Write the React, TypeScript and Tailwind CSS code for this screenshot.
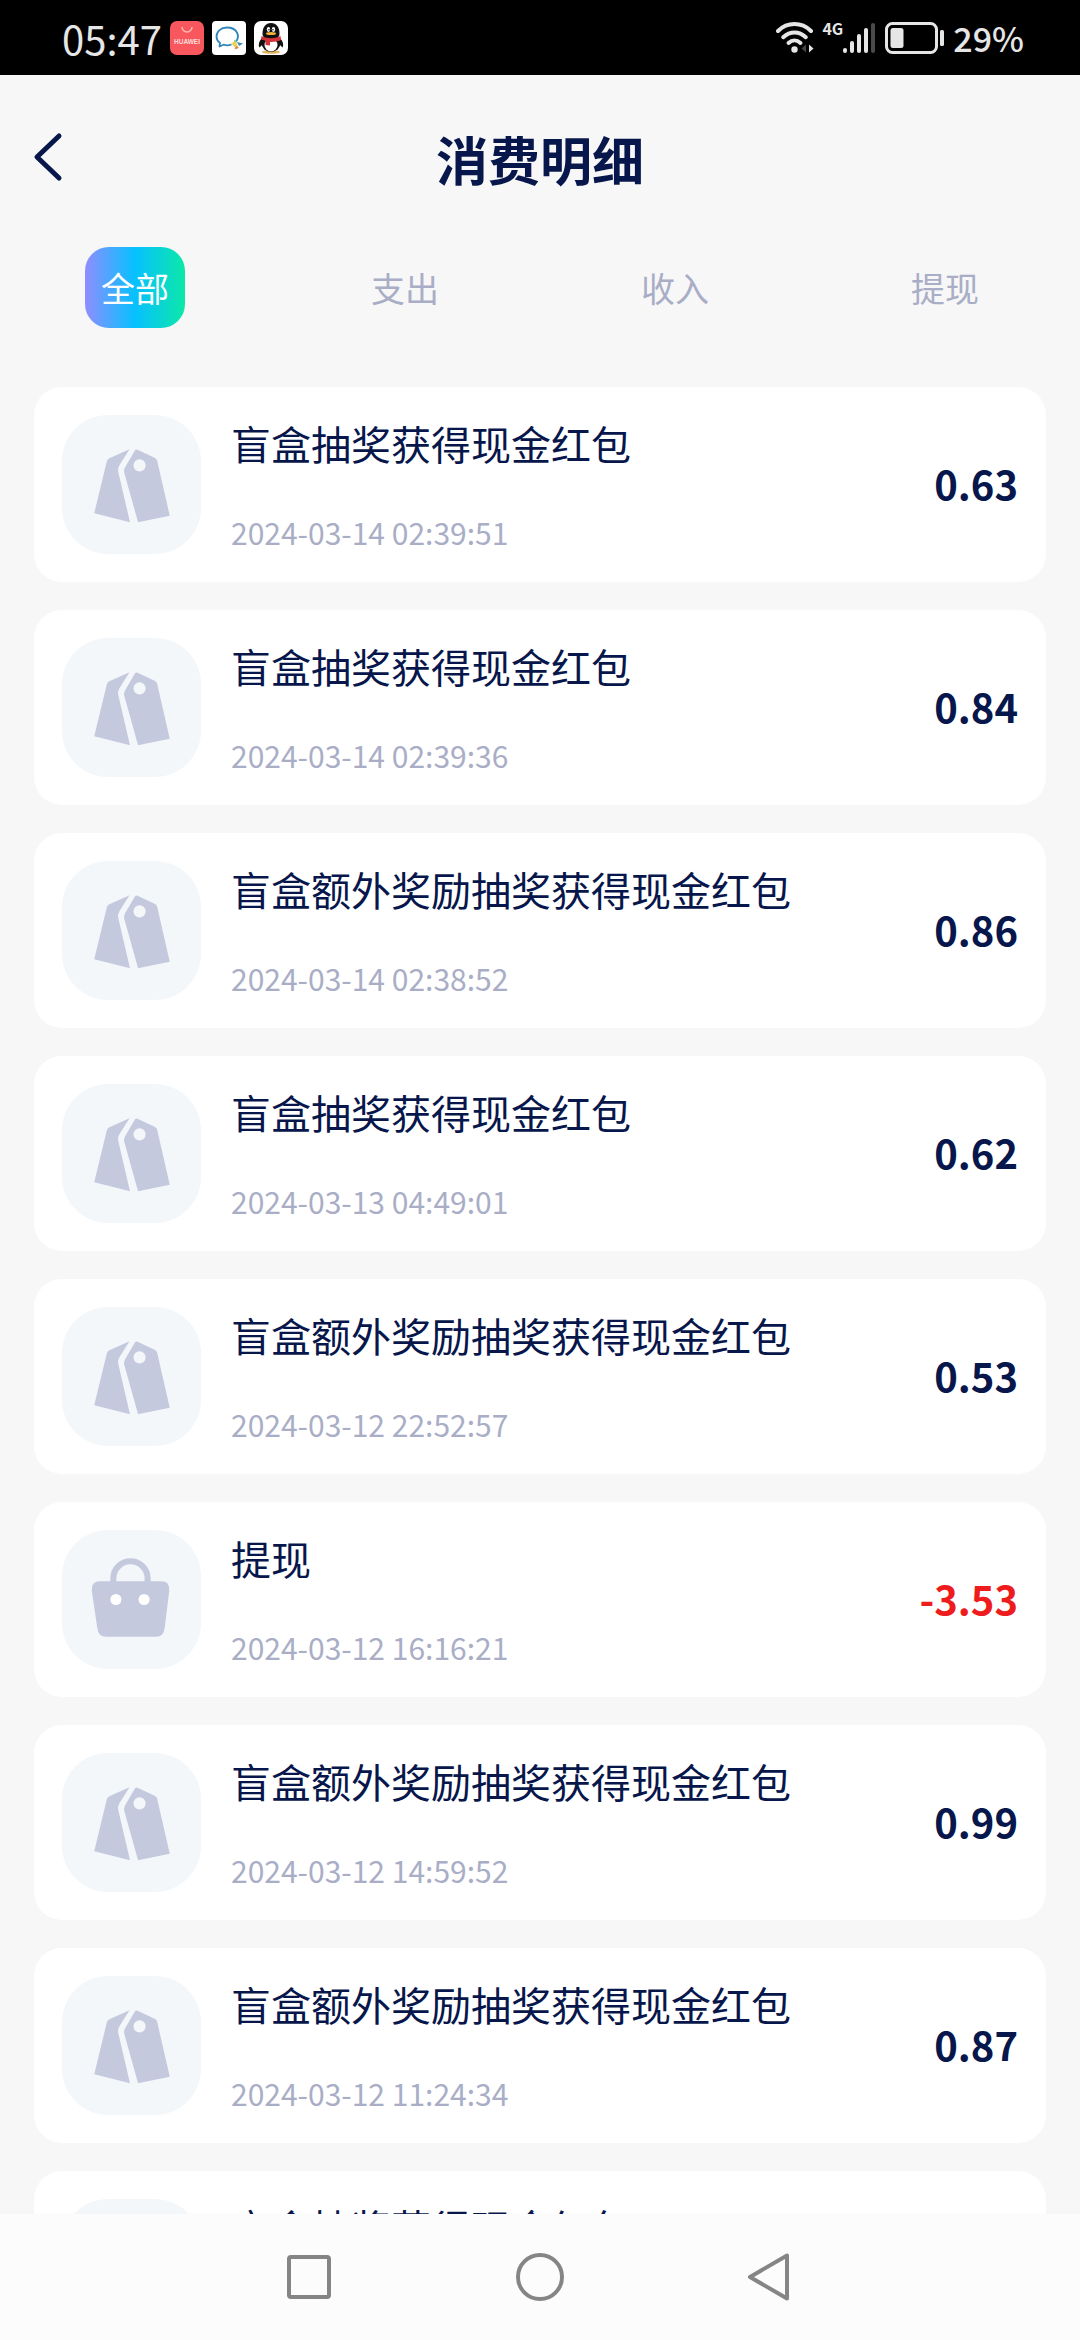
const tabs = ["全部", "支出", "收入", "提现"];

type RecordItem = {
  title: string;
  time?: string;
  amount?: string;
};

const records: RecordItem[] = [
  { title: "盲盒抽奖获得现金红包", time: "2024-03-14 02:39:51", amount: "0.63" },
  { title: "盲盒抽奖获得现金红包", time: "2024-03-14 02:39:36", amount: "0.84" },
  { title: "盲盒额外奖励抽奖获得现金红包", time: "2024-03-14 02:38:52", amount: "0.86" },
  { title: "盲盒抽奖获得现金红包", time: "2024-03-13 04:49:01", amount: "0.62" },
  { title: "盲盒额外奖励抽奖获得现金红包", time: "2024-03-12 22:52:57", amount: "0.53" },
  { title: "提现", time: "2024-03-12 16:16:21", amount: "-3.53" },
  { title: "盲盒额外奖励抽奖获得现金红包", time: "2024-03-12 14:59:52", amount: "0.99" },
  { title: "盲盒额外奖励抽奖获得现金红包", time: "2024-03-12 11:24:34", amount: "0.87" },
  { title: "盲盒抽奖获得现金红包" },
];

function HuaweiIcon() {
  return (
    <svg viewBox="0 0 34 34" className="size-[34px]" aria-hidden="true">
      <rect width="34" height="34" rx="7" fill="#f8585d" />
      <path d="M12 6a5 5 0 0 0 10 0" fill="none" stroke="#ffb9b4" strokeWidth="1.5" />
      <text x="17" y="22.5" textAnchor="middle" fontSize="6.5" fontWeight="700" fill="#ffdcd8" fontFamily="Liberation Sans">
        HUAWEI
      </text>
    </svg>
  );
}

function ChatIcon() {
  return (
    <svg viewBox="0 0 34 34" className="size-[34px]" aria-hidden="true">
      <rect width="34" height="34" rx="4" fill="#fff" />
      <path
        d="M24 20.500C26 18 26.500 14.500 25 11.500C23 8 19.500 6.500 15 6.500C9 6.500 4.500 10.500 4.500 15.500C4.500 18.500 6 20.500 8 22L7.500 25.500L11.500 23.700C14 24.500 17 24.500 19.500 23.500"
        fill="none"
        stroke="#2e86bd"
        strokeWidth="1.800"
        strokeLinejoin="round"
      />
      <path d="M22.500 18.500l2.500 3-4 1.500z" fill="#9fd06a" />
      <path d="M25 21l6 1.500-4 2.500z" fill="#3a86b8" />
      <path d="M22.500 28.500l1.500-5 3 3.500z" fill="#d98a4c" />
      <path d="M19 22l5-1 1.500 4-3 1z" fill="#f0cf55" />
    </svg>
  );
}

function QQIcon() {
  return (
    <svg viewBox="0 0 34 34" className="size-[34px]" aria-hidden="true">
      <rect width="34" height="34" rx="7" fill="#fff" />
      <ellipse cx="17" cy="31" rx="9" ry="1.800" fill="#e2b45c" />
      <path d="M8 17C5 20 4 24 5.500 26.500L9 23zM26 17C29 20 30 24 28.500 26.500L25 23z" fill="#111" />
      <ellipse cx="17" cy="22" rx="9.500" ry="9" fill="#111" />
      <ellipse cx="17" cy="24" rx="6.500" ry="6.500" fill="#fff" />
      <path d="M8.500 13C8.500 6 11.500 2 17 2S25.500 6 25.500 13C25.500 17 21 18 17 18S8.500 17 8.500 13z" fill="#111" />
      <ellipse cx="14.500" cy="8.500" rx="1.700" ry="2.400" fill="#fff" />
      <ellipse cx="19.500" cy="8.500" rx="1.700" ry="2.400" fill="#fff" />
      <circle cx="15" cy="8.700" r=".8" fill="#111" />
      <circle cx="19" cy="8.700" r=".8" fill="#111" />
      <ellipse cx="17" cy="12.500" rx="5" ry="1.500" fill="#f2b13c" />
      <path d="M7.500 15c6 3 13 3 19 0l.5 4c-4 1.700-8 2.200-11 1.900v3.600l-4.500-.5v-4.200l-4.500-1.500z" fill="#d3343a" />
    </svg>
  );
}

function WifiIcon() {
  return (
    <svg viewBox="0 0 38 32" className="h-8 w-[38px]" aria-hidden="true">
      <g fill="none" stroke="#e6e6e6" strokeWidth="4" strokeLinecap="round">
        <path d="M2 9C11.500-.2 25.500-.2 35 9" />
        <path d="M7.200 15.200C14 8.800 23 8.800 29.800 15.200" />
        <path d="M12.500 21C16.200 17.600 20.800 17.600 24.500 21" />
      </g>
      <circle cx="18.500" cy="27.500" r="3.200" fill="#e6e6e6" />
      <path d="M30 22.500v8L25.500 26.500z" fill="#444" />
      <path d="M33 22.500v8L37.500 26.500z" fill="#e6e6e6" />
    </svg>
  );
}

function SignalIcon() {
  return (
    <svg viewBox="0 0 34 32" className="h-8 w-[34px]" aria-hidden="true">
      <g fill="#e6e6e6">
        <rect x="0" y="26" width="4" height="5" rx="2" />
        <rect x="7" y="19" width="4" height="12" rx="2" />
        <rect x="14" y="12" width="4" height="19" rx="2" />
        <rect x="21" y="6" width="4" height="25" rx="2" />
      </g>
      <rect x="28" y="1" width="4" height="30" rx="2" fill="#4a4a4a" />
    </svg>
  );
}

function BatteryIcon() {
  return (
    <svg viewBox="0 0 60 32" className="h-8 w-[60px]" aria-hidden="true">
      <rect x="1.500" y="1.500" width="50" height="29" rx="6" fill="none" stroke="#e6e6e6" strokeWidth="3" />
      <rect x="5.500" y="6" width="13" height="20" rx="2.500" fill="#e6e6e6" />
      <rect x="55" y="8" width="4" height="16" rx="1.500" fill="#e6e6e6" />
    </svg>
  );
}

function TagIcon() {
  return (
    <svg viewBox="0 0 138 138" className="size-full" aria-hidden="true">
      <path d="M67 34L47 43Q45 44 44.500 46L32 97.500L67.500 106.500L56 57Q55 53 57 50z" fill="#c5c9de" />
      <path d="M72.500 35Q73.500 34 75 34.500L92 42.500Q94 43.500 94.500 45.500L107 100L75.500 106.500L62 58Q61 55 62.500 52z" fill="#c5c9de" />
      <circle cx="77" cy="50" r="6" fill="#f4f7fa" />
    </svg>
  );
}

function BagIcon() {
  return (
    <svg viewBox="0 0 138 138" className="size-full" aria-hidden="true">
      <path d="M51 54V48A17 17 0 0 1 85 48V54" fill="none" stroke="#c5c9de" strokeWidth="6" />
      <path d="M38 51H99Q107 51 106.500 60L102 97Q101 106 93 106H44Q36 106 35 97L29.500 60Q29 51 38 51z" fill="#c5c9de" />
      <circle cx="53.500" cy="69" r="5.500" fill="#fff" />
      <circle cx="81.500" cy="69" r="5.500" fill="#fff" />
    </svg>
  );
}

function StatusBar() {
  return (
    <div className="flex h-[75px] shrink-0 items-center justify-between bg-black pr-14 pl-[62px] text-[#e6e6e6]">
      <div className="flex items-center gap-2">
        <span className="w-[100px] text-[40px] leading-10">05:47</span>
        <HuaweiIcon />
        <ChatIcon />
        <QQIcon />
      </div>
      <div className="flex items-center">
        <WifiIcon />
        <span className="ml-2 self-start text-base leading-5 font-bold">4G</span>
        <SignalIcon />
        <span className="ml-2">
          <BatteryIcon />
        </span>
        <span className="ml-2 text-[34px] leading-10 font-medium">29%</span>
      </div>
    </div>
  );
}

function RecordCard({ item }: { item: RecordItem }) {
  const isWithdraw = item.amount?.startsWith("-");

  return (
    <li className="flex shrink-0 items-center rounded-[28px] bg-white p-7">
      <div className="size-[139px] shrink-0 rounded-[46px] bg-[#f4f7fa]">{isWithdraw ? <BagIcon /> : <TagIcon />}</div>
      <div className="ml-[30px] flex h-[139px] min-w-0 flex-1 flex-col justify-between">
        <h2 className="truncate text-[40px] leading-[56px] text-[#07164b]">{item.title}</h2>
        {item.time && <time className="text-[30px] leading-[44px] text-[#a9aec6]">{item.time}</time>}
      </div>
      {item.amount && (
        <span className={isWithdraw ? "pb-1 text-[40px] leading-10 font-bold text-[#ee1c1c]" : "pb-1 text-[40px] leading-10 font-bold text-[#07164b]"}>
          {item.amount}
        </span>
      )}
    </li>
  );
}

export default function App() {
  return (
    <div className="flex h-screen flex-col bg-[#f7f7f7] font-['Noto_Sans_CJK_SC',sans-serif]">
      <StatusBar />

      <header className="grid shrink-0 grid-cols-3 items-center px-7 pt-12 pb-10">
        <button type="button" aria-label="返回" className="justify-self-start">
          <svg viewBox="0 0 40 60" className="h-[60px] w-10" fill="none" stroke="#07164b" strokeWidth="5" strokeLinecap="round" strokeLinejoin="round">
            <path d="M31 7L9 28L31 49" />
          </svg>
        </button>
        <h1 className="text-center text-[52px] leading-[72px] font-bold whitespace-nowrap text-[#07164b]">消费明细</h1>
      </header>

      <nav className="grid shrink-0 grid-cols-4 justify-items-center pt-3">
        {tabs.map((tab, i) => (
          <button
            key={tab}
            type="button"
            className={
              i === 0
                ? "rounded-3xl bg-linear-to-r/srgb from-[#8f8dff] via-[#06c1ff] to-[#0ce8a8] p-4 text-[34px] leading-[49px] text-white"
                : "rounded-3xl p-4 text-[34px] leading-[49px] text-[#a9aec6]"
            }
          >
            {tab}
          </button>
        ))}
      </nav>

      <main className="mt-[59px] min-h-0 flex-1 overflow-hidden px-[34px]">
        <ul className="flex flex-col gap-7">
          {records.map((item, i) => (
            <RecordCard key={i} item={item} />
          ))}
        </ul>
      </main>

      <footer className="flex h-[126px] shrink-0 items-center justify-center gap-[183px] bg-[#fcfcfc]">
        <button type="button" aria-label="最近任务">
          <svg viewBox="0 0 48 48" className="size-12" fill="none" stroke="#858585" strokeWidth="4">
            <rect x="4" y="4" width="40" height="40" rx="2" />
          </svg>
        </button>
        <button type="button" aria-label="主页">
          <svg viewBox="0 0 48 48" className="size-12" fill="none" stroke="#858585" strokeWidth="4">
            <circle cx="24" cy="24" r="22" />
          </svg>
        </button>
        <button type="button" aria-label="返回上一页">
          <svg viewBox="0 0 48 48" className="size-12" fill="none" stroke="#858585" strokeWidth="4" strokeLinejoin="round">
            <path d="M40 2.500V45.500L3 24z" />
          </svg>
        </button>
      </footer>
    </div>
  );
}
